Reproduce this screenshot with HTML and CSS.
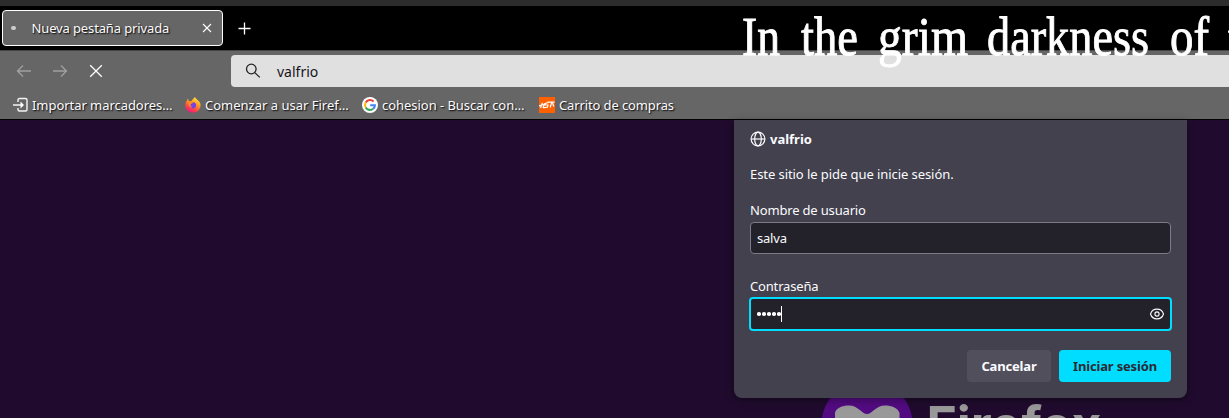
FILE: index.html
```html
<!DOCTYPE html>
<html lang="es">
<head>
<meta charset="utf-8">
<title>Nueva pestaña privada</title>
<link rel="stylesheet" href="styles.css">
</head>
<body>
<div class="browser">
  <div class="desktop-bar"></div>
  <header class="tabs">
    <div class="tab">
      <span class="loader"></span>
      <span class="tab-title">Nueva pestaña privada</span>
      <svg class="tab-close" viewBox="0 0 10 10"><path d="M1 1l8 8M9 1l-8 8"/></svg>
    </div>
    <svg class="new-tab" viewBox="0 0 14 14"><path d="M6.500 .5v12M.5 6.500h12"/></svg>
  </header>
  <nav class="toolbar">
    <svg class="nav-icon dim" viewBox="0 0 16 16"><path d="M15 8H1.800M7 2.500L1.500 8L7 13.500"/></svg>
    <svg class="nav-icon dim" viewBox="0 0 16 16"><path d="M1 8h13.200M9 2.500L14.500 8L9 13.500"/></svg>
    <svg class="nav-icon" viewBox="0 0 16 16"><path d="M2.200 2.200l11.600 11.600M13.800 2.200L2.200 13.800"/></svg>
    <div class="address">
      <svg class="search" viewBox="0 0 16 16"><circle cx="6.300" cy="6" r="4.800"/><path d="M9.800 9.600l5 4.800"/></svg>
      <span class="url">valfrio</span>
    </div>
  </nav>
  <div class="bookmarks">
    <div class="bookmark b1">
      <svg viewBox="0 0 16 16"><path d="M5 5V3q0-1.500 1.500-1.500H12.500Q14 1.500 14 3V12.500Q14 14 12.500 14H6.500Q5 14 5 12.500V11M0 8H10" fill="none" stroke="#f4f4f4" stroke-width="1.400"/><path d="M7.500 4.500L11 8L7.500 11.500Z" fill="#fff"/></svg>
      <span>Importar marcadores…</span>
    </div>
    <div class="bookmark b2">
      <svg viewBox="0 0 16 16">
        <defs><linearGradient id="fire" x1=".8" y1="0" x2=".3" y2="1"><stop offset="0" stop-color="#fff044"/><stop offset=".4" stop-color="#ff9a1f"/><stop offset=".75" stop-color="#ff3f4a"/><stop offset="1" stop-color="#e8148a"/></linearGradient></defs>
        <path d="M10 0C10.500 2 14 3 15.300 6.500C16.500 11 13 15.800 8 15.800C3.500 15.800.300 12.500.300 8.300C.300 6 1 4.500 2.200 3L2.800 1.600L4 4L6.500 4C7.500 2.500 8.500 1.500 10 0Z" fill="url(#fire)"/>
        <circle cx="8" cy="8.300" r="3.100" fill="#7542e5"/>
        <path d="M3 5C5 3.500 7.500 4.300 8.300 5.800L6 7C5 8 5.500 9.800 7.500 10C5.500 11.500 3.500 9 3 5Z" fill="#ff8a25"/>
      </svg>
      <span>Comenzar a usar Firef…</span>
    </div>
    <div class="bookmark b3">
      <svg viewBox="0 0 16 16"><circle cx="8" cy="8" r="8" fill="#fff"/><g fill="none" stroke-width="2.100"><path d="M11.600 4.400A5 5 0 0 0 3.700 5.500" stroke="#ea4335"/><path d="M3.700 5.500A5 5 0 0 0 3.700 10.500" stroke="#fbbc05"/><path d="M3.700 10.500A5 5 0 0 0 11.200 11.800" stroke="#34a853"/><path d="M11.200 11.800A5 5 0 0 0 12.900 8.200H8.200" stroke="#4285f4"/></g></svg>
      <span>cohesion - Buscar con…</span>
    </div>
    <div class="bookmark b4">
      <svg viewBox="0 0 16 16"><path d="M0 0h16v16H0z" fill="#ff6000"/><path d="M0 8.800L4.500 7.500M1.500 11L3.500 5.700M4 11L5.500 6.500M9.500 5.500L6.300 6.500L6 8H9L8.500 10L4.500 10.800M8.500 5L15.500 5.200M12.800 5.200L11.200 10.500M13.500 6L14.800 9.500" fill="none" stroke="#fff" stroke-width="1.200"/></svg>
      <span>Carrito de compras</span>
    </div>
  </div>
  <main class="page">
    <section class="dialog">
      <div class="site"><svg viewBox="0 0 16 16"><circle cx="8" cy="8" r="6.900"/><ellipse cx="8" cy="8" rx="3.300" ry="6.900"/><path d="M1 8h14"/></svg><b>valfrio</b></div>
      <p class="message"><span>Este sitio le pide que inicie sesión.</span></p>
      <div class="label user-label"><span>Nombre de usuario</span></div>
      <div class="field"><span class="value">salva</span></div>
      <div class="label pass-label"><span>Contraseña</span></div>
      <div class="field focused"><span class="dots"><i></i><i></i><i></i><i></i><i></i></span><span class="caret"></span>
        <svg class="eye" viewBox="0 0 16 16"><path d="M1.500 8C3.500 1.500 12.500 1.500 14.500 8C12.500 14.500 3.500 14.500 1.500 8Z"/><circle cx="8" cy="8" r="2.100"/></svg>
      </div>
      <div class="actions"><button class="cancel"><span>Cancelar</span></button><button class="login"><span>Iniciar sesión</span></button></div>
    </section>
    <svg class="brand" viewBox="0 398 300 20">
      <circle cx="47" cy="425" r="45.600" fill="#530b82"/>
      <path d="M15 418V413C16 408 22 405.500 29 405.500C38 405.500 42 414 47 414C52 414 56 405.500 65 405.500C72 405.500 78 408 79.500 413V418Z" fill="#999"/>
      <text x="106.500" y="443" textLength="175" lengthAdjust="spacingAndGlyphs">Firefox</text>
    </svg>
  </main>
  <svg class="theme-quote" viewBox="0 0 500 80">
    <text x="11" y="54.500" textLength="38" lengthAdjust="spacingAndGlyphs">In</text>
    <text x="70" y="54.500" textLength="57" lengthAdjust="spacingAndGlyphs">the</text>
    <text x="147" y="54.500" textLength="90" lengthAdjust="spacingAndGlyphs">grim</text>
    <text x="256" y="54.500" textLength="162" lengthAdjust="spacingAndGlyphs">darkness</text>
    <text x="439" y="54.500" textLength="39" lengthAdjust="spacingAndGlyphs">of</text>
    <text x="497" y="54.500">t</text>
  </svg>
</div>
</body>
</html>
```
FILE: styles.css
```css
* { box-sizing: border-box; }
body { margin: 0; overflow: hidden; font: 13px/18px "Noto Sans", sans-serif; color: #fbfbfe; }
svg { display: block; flex: none; }
span, b { white-space: nowrap; }
.browser { position: relative; width: 1229px; height: 418px; overflow: hidden; background: #000; display: flex; flex-direction: column; }
.desktop-bar { height: 6px; background: #2c2c2c; }
.tabs { height: 44px; padding: 4px 2px; display: flex; align-items: flex-start; }
.tab { width: 221px; height: 36px; border: 1px solid #fff; border-radius: 4px; background: #666; display: flex; align-items: center; padding: 0 10px 0 8px; }
.loader { width: 5px; height: 4px; border-radius: 2px; background: #ccc; margin-right: 15.500px; }
.tab-title { flex: 1; letter-spacing: -.13px; text-shadow: 1px 1px 1.500px #000; }
.tab-close { width: 10px; height: 10px; fill: none; stroke: #fff; stroke-width: 1.100; }
.new-tab { width: 14px; height: 14px; margin: 12px 0 0 15px; fill: none; stroke: #fff; stroke-width: 1.300; }
.toolbar { height: 41px; border-top: 1px solid #444; background: #666; padding: 4px 0 0 16px; display: flex; gap: 20px; }
.nav-icon { width: 16px; height: 16px; margin-top: 8px; fill: none; stroke: #fff; stroke-width: 1.300; }
.dim { stroke: #a0a0a0; }
.address { flex: 1; height: 32px; margin-left: 107px; border-radius: 4px 0 0 4px; background: #e0e0e0; display: flex; align-items: center; padding-left: 14px; gap: 16px; color: #15141a; font-size: 14px; }
.url { padding-top: 1px; }
.search { width: 16px; height: 16px; fill: none; stroke: #222; stroke-width: 1.300; }
.bookmarks { height: 29px; background: #666; border-bottom: 1px solid #000; display: flex; padding: 6px 0 0 13px; text-shadow: 1px 1px 1.500px #000; }
.bookmark { display: flex; height: 16px; align-items: center; gap: 4px; }
.bookmark svg { width: 16px; height: 16px; }
.b1 { width: 172px; gap: 3px; letter-spacing: -.05px; }
.b2 { width: 177px; }
.b3 { width: 177px; letter-spacing: -.04px; }
.b4 { letter-spacing: -.12px; }
.page { flex: 1; background: #200b2e; padding-left: 734px; }
.dialog { width: 453px; height: 278px; background: #42414d; border-radius: 0 0 8px 8px; padding: 10px 16px 16px; box-shadow: 0 2px 8px #0006; position: relative; }
.site { display: flex; align-items: center; gap: 4px; height: 18px; }
.site svg { width: 16px; height: 16px; fill: none; stroke: #fbfbfe; stroke-width: 1.200; }
.message { margin: 17px 0 0; letter-spacing: -.07px; }
.label { letter-spacing: -.17px; }
.user-label { margin-top: 18px; }
.field { height: 32px; margin-top: 3px; border: 1px solid #7c7b86; border-radius: 4px; background: #23222b; padding: 0 6px; display: flex; align-items: center; }
.value { letter-spacing: -.2px; }
.pass-label { margin-top: 23px; }
.focused { margin: 2px -1px 0; height: 34px; border: 2px solid #00ddff; padding-right: 5px; }
.dots { display: flex; gap: 1.400px; margin-right: .4px; }
.dots i { width: 3.600px; height: 3.600px; border-radius: 50%; background: #fff; }
.caret { width: 1px; height: 16px; background: #fff; margin-right: auto; }
.eye { width: 16px; height: 16px; fill: none; stroke: #fbfbfe; stroke-width: 1.100; }
.actions { margin-top: 19px; display: flex; justify-content: flex-end; gap: 8px; }
button { height: 32px; border: 0; border-radius: 4px; padding: 0; font: 700 13px/18px "Noto Sans", sans-serif; color: #fbfbfe; letter-spacing: -.17px; }
.cancel { width: 84px; background: #504f5b; }
.login { width: 112px; background: #00ddff; color: #2b2a33; }
.brand { width: 300px; height: 20px; margin-left: 86px; overflow: hidden; }
.brand text { font: 700 51px Inter, sans-serif; fill: #999; }
.theme-quote { position: absolute; left: 731px; top: 0; width: 500px; height: 80px; }
.theme-quote text { font: 54px "Liberation Serif", serif; fill: #fff; stroke: #fff; stroke-width: .9; }
```
